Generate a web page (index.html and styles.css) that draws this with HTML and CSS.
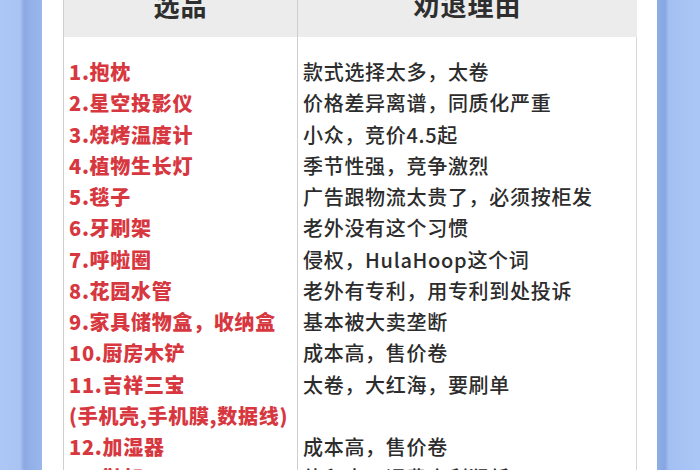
FILE: index.html
```html
<!DOCTYPE html>
<html lang="zh">
<head>
<meta charset="utf-8">
<title>选品 劝退理由</title>
<link rel="stylesheet" href="styles.css">
</head>
<body>
<div class="page">
  <div class="side side-left"></div>
  <div class="paper">
    <div class="table">
      <div class="th">选品</div>
      <div class="th th-r">劝退理由</div>

      <div class="gap"></div>
      <div class="gap gap-r"></div>

      <div class="item">1.抱枕</div>
      <div class="reason">款式选择太多，太卷</div>
      <div class="item">2.星空投影仪</div>
      <div class="reason">价格差异离谱，同质化严重</div>
      <div class="item">3.烧烤温度计</div>
      <div class="reason">小众，竞价4.5起</div>
      <div class="item">4.植物生长灯</div>
      <div class="reason">季节性强，竞争激烈</div>
      <div class="item">5.毯子</div>
      <div class="reason">广告跟物流太贵了，必须按柜发</div>
      <div class="item">6.牙刷架</div>
      <div class="reason">老外没有这个习惯</div>
      <div class="item">7.呼啦圈</div>
      <div class="reason">侵权，HulaHoop这个词</div>
      <div class="item">8.花园水管</div>
      <div class="reason">老外有专利，用专利到处投诉</div>
      <div class="item">9.家具储物盒，收纳盒</div>
      <div class="reason">基本被大卖垄断</div>
      <div class="item">10.厨房木铲</div>
      <div class="reason">成本高，售价卷</div>
      <div class="item">11.吉祥三宝</div>
      <div class="reason">太卷，大红海，要刷单</div>
      <div class="item">(手机壳,手机膜,数据线)</div>
      <div class="reason"></div>
      <div class="item">12.加湿器</div>
      <div class="reason">成本高，售价卷</div>
      <div class="item">13.鞋架</div>
      <div class="reason">体积大，运费高利润低</div>
    </div>
  </div>
  <div class="side side-right"></div>
</div>
</body>
</html>
```

FILE: styles.css
```css
html, body {
  margin: 0;
  padding: 0;
}

body {
  width: 700px;
  height: 470px;
  overflow: hidden;
  font-family: "Noto Sans CJK SC", "Noto Sans", sans-serif;
}

.page {
  display: flex;
  height: 470px;
  overflow: hidden;
}

.side {
  flex: none;
  height: 100%;
}

.side-left {
  width: 42px;
  background:
    linear-gradient(to right,
      #acc7f5 0px, #a9c4f3 20px, #8ea9e2 24px, #93b0e8 31px, #9ab7ec 42px);
}

.side-right {
  width: 43px;
  background:
    linear-gradient(to right,
      #8eaee6 0px, #87a6e2 8px, #a3c0f3 12px, #abc7f6 43px);
}

.paper {
  flex: none;
  width: 615px;
  background: #ffffff;
  padding: 0 20px 0 21px;
  box-sizing: border-box;
}

.table {
  display: grid;
  grid-template-columns: 233px 340px;
  border-left: 1px solid #cfcfcf;
  border-right: 1px solid #d6d6d6;
  margin-top: -14px;
  letter-spacing: 0.7px;
}

.th {
  background: #ececec;
  color: #2e2e2e;
  font-size: 26px;
  font-weight: 700;
  line-height: 38px;
  padding-bottom: 13px;
  text-align: center;
  letter-spacing: 1px;
}

.th-r,
.gap-r,
.reason {
  border-left: 1px solid #cfcfcf;
}

.gap {
  height: 19px;
}

.item,
.reason {
  font-size: 20px;
  line-height: 31.25px;
  height: 31.25px;
  white-space: nowrap;
  padding-left: 5px;
}

.item {
  color: #d7383f;
  font-weight: 900;
}

.reason {
  color: #2c2c2c;
  font-weight: 500;
}
```
